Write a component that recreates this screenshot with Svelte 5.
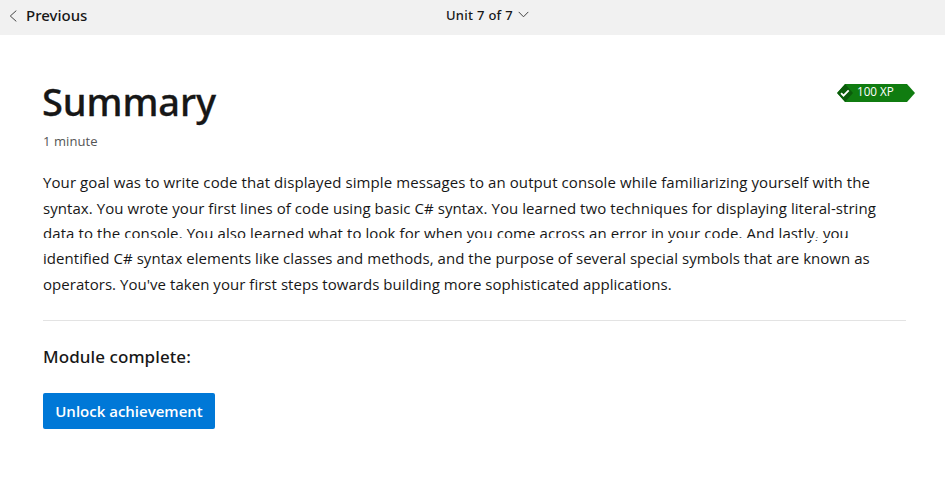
<script>
  const lines = [
    { text: 'Your goal was to write code that displayed simple messages to an output console while familiarizing yourself with the', height: 26, spacing: 0.09 },
    { text: 'syntax. You wrote your first lines of code using basic C# syntax. You learned two techniques for displaying literal-string', height: 25, spacing: 0.062 },
    { text: 'data to the console. You also learned what to look for when you come across an error in your code. And lastly, you', height: 25, spacing: 0.085, cut: true },
    { text: 'identified C# syntax elements like classes and methods, and the purpose of several special symbols that are known as', height: 26, spacing: 0.04 },
    { text: "operators. You've taken your first steps towards building more sophisticated applications.", height: 27, spacing: 0.04 }
  ];
</script>

<div class="page">
  <nav>
    <a class="previous" href="#previous">
      <svg width="8" height="12" viewBox="0 0 8 12"><path d="M7.3.6 1.3 6l6 5.4" /></svg>
      <span>Previous</span>
    </a>
    <button class="unit">
      <span>Unit 7 of 7</span>
      <svg width="11" height="7" viewBox="0 0 11 7"><path d="M.7.9 5.5 5.8 10.3.9" /></svg>
    </button>
  </nav>

  <main>
    <header>
      <div>
        <h1>Summary</h1>
        <div class="time">1 minute</div>
      </div>
      <div class="xp">
        <svg width="17" height="18" viewBox="0 0 17 18">
          <path class="flap" d="M0 9 8 0 16 9 8 18Z" />
          <path class="check" d="m4.1 9.2 2.4 2.4 5.2-5.3" />
        </svg>
        <span>100 XP</span>
      </div>
    </header>

    <p>
      {#each lines as line}
        <span class="line" class:cut={line.cut} style="height: {line.height}px; letter-spacing: {line.spacing}px">{line.text}</span>
      {/each}
    </p>

    <hr />
    <h2>Module complete:</h2>
    <button class="unlock">Unlock achievement</button>
  </main>
</div>

<style>
  :global(body) { background: #fff; }
  .page {
    height: 477px;
    overflow: hidden;
    background: #fff;
    color: #171717;
    font-family: "Open Sans", "Noto Sans", sans-serif;
  }
  nav {
    box-sizing: border-box;
    display: grid;
    grid-template-columns: 446px auto 1fr;
    height: 35px;
    background: #f1f1f1;
    padding-bottom: 4px;
  }
  .previous, .unit {
    display: flex;
    align-items: center;
    border: 0;
    padding: 0;
    background: none;
    color: #171717;
    text-decoration: none;
    white-space: nowrap;
    font: 500 15px/31px "Noto Sans", sans-serif;
  }
  .previous { padding-left: 9px; gap: 9px; }
  .unit { font-size: 13px; letter-spacing: 0.28px; gap: 5px; }
  nav svg { fill: none; stroke: #444; stroke-width: 1; }
  .unit svg { margin-top: -2px; }
  main { padding: 0 39px 0 43px; }
  header { display: flex; justify-content: space-between; height: 134px; }
  h1 {
    margin: 39px 0 0 -1px;
    font: 500 38px/54px "Noto Sans", sans-serif;
    letter-spacing: -0.1px;
    -webkit-text-stroke: 0.3px #171717;
  }
  .time { margin-top: 3px; font-size: 13px; line-height: 20px; letter-spacing: 0.08px; color: #555; }
  .xp {
    display: flex;
    flex: none;
    width: 78px;
    height: 18px;
    margin: 49px -9px 0 0;
    background: #107c10;
    clip-path: polygon(0 50%, 8px 0, 70px 0, 100% 50%, 70px 100%, 8px 100%);
    color: #fff;
    font: 11.7px/15px "Open Sans", sans-serif;
  }
  .xp span { margin-left: 3px; }
  .flap { fill: #0b5b0b; }
  .check { fill: none; stroke: #fff; stroke-width: 1.9; }
  p { margin: 0; font-size: 15px; }
  .line { display: block; line-height: 26px; white-space: nowrap; }
  .cut { position: relative; }
  /* Thin white seam across the foot of the third line. */
  .cut::after {
    content: "";
    position: absolute;
    left: 0;
    right: 0;
    top: 18px;
    height: 2px;
    background: #fff;
  }
  hr { height: 1px; margin: 22px 0 0; border: 0; background: #e3e3e3; }
  h2 { margin: 22px 0 0; font: 500 17px/28px "Noto Sans", sans-serif; letter-spacing: 0.08px; }
  .unlock {
    display: block;
    width: 172px;
    height: 36px;
    margin: 22px 0 0;
    padding: 0;
    border: 0;
    border-radius: 2px;
    background: #0078d7;
    color: #fff;
    font: 600 15px/36px "Open Sans", sans-serif;
  }
</style>
